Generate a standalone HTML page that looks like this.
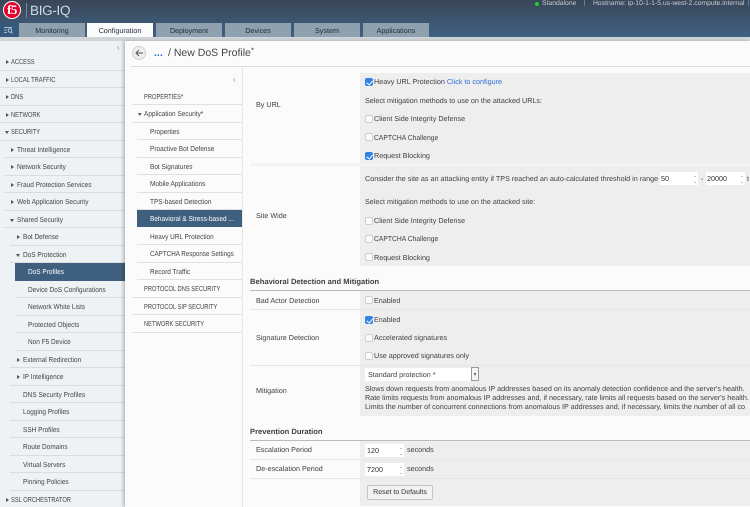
<!DOCTYPE html>
<html><head><meta charset="utf-8"><style>
*{box-sizing:border-box}
html,body{margin:0;padding:0;width:750px;height:507px;overflow:hidden;background:#eef2f5}
body{position:relative;font-family:"Liberation Sans",sans-serif;font-size:7.2px;color:#444;text-rendering:geometricPrecision}
div,span.a{position:absolute;white-space:nowrap}
#top{left:0;top:0;width:750px;height:37px;background:linear-gradient(#3a4557,#3f6283)}
#strip{left:0;top:37px;width:750px;height:4px;background:#d0d5d9}
.tab{top:23px;height:14px;width:66px;background:#8fa1ae;color:#1f2b38;text-align:center;line-height:15px;font-size:7.2px}
.r{left:0;width:125px;height:17.5px;line-height:17px;border-bottom:1px solid #d9dde0;color:#444}
.r i{position:absolute;top:7px;width:0;height:0;border-left:3px solid #555;border-top:2px solid transparent;border-bottom:2px solid transparent}
.r i.d{border-top:3px solid #555;border-left:2px solid transparent;border-right:2px solid transparent;border-bottom:0;top:8px}
.r span,.n span{position:absolute;top:0;transform:scaleX(.9);transform-origin:0 50%}
.r span.u,.n span.u{transform:scaleX(.8)}
.n{left:132px;width:110px;height:17.5px;line-height:17px;border-bottom:1px solid #e0e0e0;color:#444}
.t{color:#3f3f3f;line-height:10px;height:10px}
.cap{transform:scaleX(.94);transform-origin:0 50%}
.cb{width:8px;height:8px;border-radius:2px;background:#fbfbfb;border:1px solid #d0d0d0}
.cb.on{background:#2f84e6;border-color:#2f84e6}
.cb.on:after{content:"";position:absolute;left:1.6px;top:0;width:2.5px;height:4.5px;border:solid #fff;border-width:0 1px 1px 0;transform:rotate(40deg)}
.in{background:#fff;height:13px;line-height:13px;color:#333;padding-left:1px}
.in:after{content:"";position:absolute;right:2.5px;top:4px;width:2px;height:5px;border-top:1.5px solid #c4c4c4;border-bottom:1.5px solid #c4c4c4}
.ln{height:1px;background:#e6e6e6}
</style></head><body>
<div id="top"></div><div id="strip"></div>
<div style="left:3px;top:1px;width:18px;height:18px;border-radius:50%;background:#e4002b;border:1px solid #fff"></div>
<div style="left:5px;top:2px;width:14px;text-align:center;color:#fff;font:bold 13px/16px 'Liberation Serif',serif;letter-spacing:-.5px">f5</div>
<div style="left:25.5px;top:3px;width:1px;height:15px;background:#7b8a9a"></div>
<div style="left:30px;top:2px;color:#d3dae1;font:13.5px/17px 'Liberation Sans',sans-serif;letter-spacing:-.3px">BIG-IQ</div>
<div style="left:534.5px;top:1.5px;width:4px;height:4px;border-radius:50%;background:#22d02a"></div>
<div style="left:542px;top:0;line-height:7px;color:#c5ced6;font-size:6.8px">Standalone</div>
<div style="left:584px;top:0;width:1px;height:6px;background:#5f7f9e"></div>
<div style="left:593px;top:0;line-height:7px;color:#c5ced6;font-size:6.8px">Hostname: ip-10-1-1-5.us-west-2.compute.internal</div>
<div style="left:748px;top:0;width:1px;height:6px;background:#5f7f9e"></div>
<div style="left:0;top:23px;width:18px;height:14px;background:#33597d"></div>
<svg style="position:absolute;left:3px;top:26px" width="11" height="9"><path d="M1 1.5h8M1 4h3M1 6.5h3" stroke="#cfd8e0" stroke-width=".8" fill="none"/><circle cx="7" cy="4.5" r="1.8" stroke="#cfd8e0" stroke-width=".8" fill="none"/><path d="M8.3 6l1.5 1.5" stroke="#cfd8e0" stroke-width=".8"/></svg>
<div class="tab" style="left:19px">Monitoring</div>
<div class="tab" style="left:87px;background:#fbfbfb">Configuration</div>
<div class="tab" style="left:156px">Deployment</div>
<div class="tab" style="left:225px">Devices</div>
<div class="tab" style="left:294px">System</div>
<div class="tab" style="left:363px">Applications</div>

<div style="left:117px;top:44px;color:#888;font-size:8px;line-height:7px">‹</div>
<div class="r" style="top:53px"><i style="left:6px"></i><span class="u" style="left:11px">ACCESS</span></div>
<div class="r" style="top:70.5px"><i style="left:6px"></i><span class="u" style="left:11px">LOCAL TRAFFIC</span></div>
<div class="r" style="top:88px"><i style="left:6px"></i><span class="u" style="left:11px">DNS</span></div>
<div class="r" style="top:105.5px"><i style="left:6px"></i><span class="u" style="left:11px">NETWORK</span></div>
<div class="r" style="top:123px"><i class="d" style="left:5px"></i><span class="u" style="left:11px">SECURITY</span></div>
<div class="r" style="top:140.5px;left:4px;width:121px"><i style="left:7px"></i><span style="left:13px">Threat Intelligence</span></div>
<div class="r" style="top:158px;left:4px;width:121px"><i style="left:7px"></i><span style="left:13px">Network Security</span></div>
<div class="r" style="top:175.5px;left:4px;width:121px"><i style="left:7px"></i><span style="left:13px">Fraud Protection Services</span></div>
<div class="r" style="top:193px;left:4px;width:121px"><i style="left:7px"></i><span style="left:13px">Web Application Security</span></div>
<div class="r" style="top:210.5px;left:4px;width:121px"><i class="d" style="left:6px"></i><span style="left:13px">Shared Security</span></div>
<div class="r" style="top:228px;left:10px;width:115px"><i style="left:7px"></i><span style="left:12.5px">Bot Defense</span></div>
<div class="r" style="top:245.5px;left:10px;width:115px"><i class="d" style="left:6px"></i><span style="left:12.5px">DoS Protection</span></div>
<div class="r" style="top:263px;left:15px;width:110px;background:#3f5f7e;color:#fff;border:0"><span style="left:13px">DoS Profiles</span></div>
<div class="r" style="top:280.5px;left:15px;width:110px"><span style="left:13px">Device DoS Configurations</span></div>
<div class="r" style="top:298px;left:15px;width:110px"><span style="left:13px">Network White Lists</span></div>
<div class="r" style="top:315.5px;left:15px;width:110px"><span style="left:13px">Protected Objects</span></div>
<div class="r" style="top:333px;left:15px;width:110px"><span style="left:13px">Non F5 Device</span></div>
<div class="r" style="top:350.5px;left:10px;width:115px"><i style="left:7px"></i><span style="left:12.5px">External Redirection</span></div>
<div class="r" style="top:368px;left:10px;width:115px"><i style="left:7px"></i><span style="left:12.5px">IP Intelligence</span></div>
<div class="r" style="top:385.5px;left:10px;width:115px"><span style="left:12.5px">DNS Security Profiles</span></div>
<div class="r" style="top:403px;left:10px;width:115px"><span style="left:12.5px">Logging Profiles</span></div>
<div class="r" style="top:420.5px;left:10px;width:115px"><span style="left:12.5px">SSH Profiles</span></div>
<div class="r" style="top:438px;left:10px;width:115px"><span style="left:12.5px">Route Domains</span></div>
<div class="r" style="top:455.5px;left:10px;width:115px"><span style="left:12.5px">Virtual Servers</span></div>
<div class="r" style="top:473px;left:10px;width:115px"><span style="left:12.5px">Pinning Policies</span></div>
<div class="r" style="top:490.5px"><i style="left:6px"></i><span class="u" style="left:11px">SSL ORCHESTRATOR</span></div>

<div style="left:125px;top:41px;width:625px;height:466px;background:#fbfbfb;box-shadow:-2px 0 3px rgba(0,0,0,.22)"></div>
<div style="left:132px;top:46px;width:14px;height:14px;border-radius:50%;background:#efefef;border:1px solid #cfcfcf"></div>
<svg style="position:absolute;left:135px;top:49px" width="9" height="8"><path d="M1 4h7M4 1L1 4l3 3" stroke="#555" stroke-width="1" fill="none"/></svg>
<div style="left:154px;top:46px;color:#2d6fd6;font:bold 10.5px/14px 'Liberation Sans',sans-serif">...</div>
<div style="left:168px;top:45px;color:#444;font-size:10.5px;line-height:16px">/ New DoS Profile</div>
<div style="left:251px;top:46px;color:#444;font-size:8px;line-height:10px">*</div>
<div style="left:131px;top:66px;width:619px;height:1px;background:#dcdcdc"></div>
<div style="left:242px;top:67px;width:1px;height:440px;background:#e8e8e8"></div>
<div style="left:233px;top:76px;color:#888;font-size:8px;line-height:7px">‹</div>

<div class="n" style="top:87.5px"><span class="u" style="left:12px">PROPERTIES*</span></div>
<div class="n" style="top:105px"><span style="left:12px">Application Security*</span><span style="left:6px;top:7.5px;width:0;height:0;border-top:3px solid #555;border-left:2px solid transparent;border-right:2px solid transparent"></span></div>
<div class="n" style="top:122.5px;left:137px;width:105px"><span style="left:13px">Properties</span></div>
<div class="n" style="top:140px;left:137px;width:105px"><span style="left:13px">Proactive Bot Defense</span></div>
<div class="n" style="top:157.5px;left:137px;width:105px"><span style="left:13px">Bot Signatures</span></div>
<div class="n" style="top:175px;left:137px;width:105px"><span style="left:13px">Mobile Applications</span></div>
<div class="n" style="top:192.5px;left:137px;width:105px"><span style="left:13px">TPS-based Detection</span></div>
<div class="n" style="top:209.5px;left:137px;width:105px;background:#3f5f7e;color:#fff;border:0;height:17.5px"><span style="left:13px">Behavioral &amp; Stress-based ...</span></div>
<div class="n" style="top:227.5px;left:137px;width:105px"><span style="left:13px">Heavy URL Protection</span></div>
<div class="n" style="top:245px;left:137px;width:105px"><span style="left:13px;transform:scaleX(.87)">CAPTCHA Response Settings</span></div>
<div class="n" style="top:262.5px;left:137px;width:105px"><span style="left:13px">Record Traffic</span></div>
<div class="n" style="top:280px"><span class="u" style="left:12px">PROTOCOL DNS SECURITY</span></div>
<div class="n" style="top:297.5px"><span class="u" style="left:12px">PROTOCOL SIP SECURITY</span></div>
<div class="n" style="top:315px"><span class="u" style="left:12px">NETWORK SECURITY</span></div>

<div style="left:360px;top:73px;width:390px;height:90px;background:#eee"></div>
<div style="left:250px;top:163px;width:500px;height:3px;background:#f4f4f4"></div>
<div style="left:360px;top:166px;width:390px;height:100px;background:#eee"></div>
<div style="left:360px;top:291px;width:390px;height:125px;background:#eee"></div>
<div style="left:360px;top:441px;width:390px;height:65px;background:#eee"></div>
<div style="left:250px;top:290px;width:500px;height:1px;background:#bbb"></div>
<div style="left:250px;top:440px;width:500px;height:1px;background:#bbb"></div>
<div class="ln" style="left:250px;top:309px;width:500px"></div>
<div class="ln" style="left:250px;top:365px;width:500px"></div>
<div class="ln" style="left:250px;top:459px;width:500px"></div>
<div class="ln" style="left:250px;top:478px;width:500px"></div>

<div class="t" style="left:256px;top:100px">By URL</div>
<div class="t" style="left:256px;top:211px">Site Wide</div>
<div class="t" style="left:250px;top:277px;font-weight:bold;font-size:7.6px">Behavioral Detection and Mitigation</div>
<div class="t" style="left:256px;top:296px">Bad Actor Detection</div>
<div class="t" style="left:256px;top:333px">Signature Detection</div>
<div class="t" style="left:256px;top:386px">Mitigation</div>
<div class="t" style="left:250px;top:427px;font-weight:bold;font-size:7.6px">Prevention Duration</div>
<div class="t" style="left:256px;top:445px">Escalation Period</div>
<div class="t" style="left:256px;top:464px">De-escalation Period</div>

<div class="cb on" style="left:365px;top:78px"></div><div class="t" style="left:374px;top:77px">Heavy URL Protection <span style="color:#2d6fd6">Click to configure</span></div>
<div class="t" style="left:365px;top:96px">Select mitigation methods to use on the attacked URLs:</div>
<div class="cb" style="left:365px;top:115px"></div><div class="t" style="left:374px;top:114px">Client Side Integrity Defense</div>
<div class="cb" style="left:365px;top:133px"></div><div class="t cap" style="left:374px;top:132.5px">CAPTCHA Challenge</div>
<div class="cb on" style="left:365px;top:151.5px"></div><div class="t" style="left:374px;top:151px">Request Blocking</div>

<div class="t" style="left:365px;top:174px">Consider the site as an attacking entity if TPS reached an auto-calculated threshold in range</div>
<div class="in" style="left:660px;top:172px;width:38px">50</div>
<div class="t" style="left:701px;top:174px">-</div>
<div class="in" style="left:706px;top:172px;width:39px">20000</div>
<div class="t" style="left:747px;top:174px">t</div>
<div class="t" style="left:365px;top:197px">Select mitigation methods to use on the attacked site:</div>
<div class="cb" style="left:365px;top:217px"></div><div class="t" style="left:374px;top:216px">Client Side Integrity Defense</div>
<div class="cb" style="left:365px;top:235px"></div><div class="t cap" style="left:374px;top:234px">CAPTCHA Challenge</div>
<div class="cb" style="left:365px;top:253px"></div><div class="t" style="left:374px;top:252.5px">Request Blocking</div>

<div class="cb" style="left:365px;top:296px"></div><div class="t" style="left:374px;top:295.5px">Enabled</div>
<div class="cb on" style="left:365px;top:315.5px"></div><div class="t" style="left:374px;top:314.5px">Enabled</div>
<div class="cb" style="left:365px;top:334px"></div><div class="t" style="left:374px;top:333px">Accelerated signatures</div>
<div class="cb" style="left:365px;top:352px"></div><div class="t" style="left:374px;top:351px">Use approved signatures only</div>

<div class="t" style="left:365px;top:368px;width:106px;height:13px;background:#fff;padding-left:3px;line-height:13px">Standard protection *</div>
<div style="left:471px;top:367px;width:8px;height:14px;background:#f4f4f4;border:1px solid #999"></div>
<div style="left:473.5px;top:373px;width:0;height:0;border-top:3px solid #333;border-left:1.5px solid transparent;border-right:1.5px solid transparent"></div>
<div class="t" style="left:365px;top:384px">Slows down requests from anomalous IP addresses based on its anomaly detection confidence and the server's health.</div>
<div class="t" style="left:365px;top:393px">Rate limits requests from anomalous IP addresses and, if necessary, rate limits all requests based on the server's health.</div>
<div class="t" style="left:365px;top:402px">Limits the number of concurrent connections from anomalous IP addresses and, if necessary, limits the number of all co</div>

<div class="in" style="left:365px;top:444px;width:39px;padding-left:2px">120</div>
<div class="t" style="left:407px;top:445px">seconds</div>
<div class="in" style="left:365px;top:463px;width:39px;padding-left:2px">7200</div>
<div class="t" style="left:407px;top:464px">seconds</div>
<div style="left:367px;top:485px;width:66px;height:15px;background:#f2f2f2;border:1px solid #c4c4c4;border-radius:2px;text-align:center;line-height:14px;color:#333;font-size:7px">Reset to Defaults</div>
</body></html>
